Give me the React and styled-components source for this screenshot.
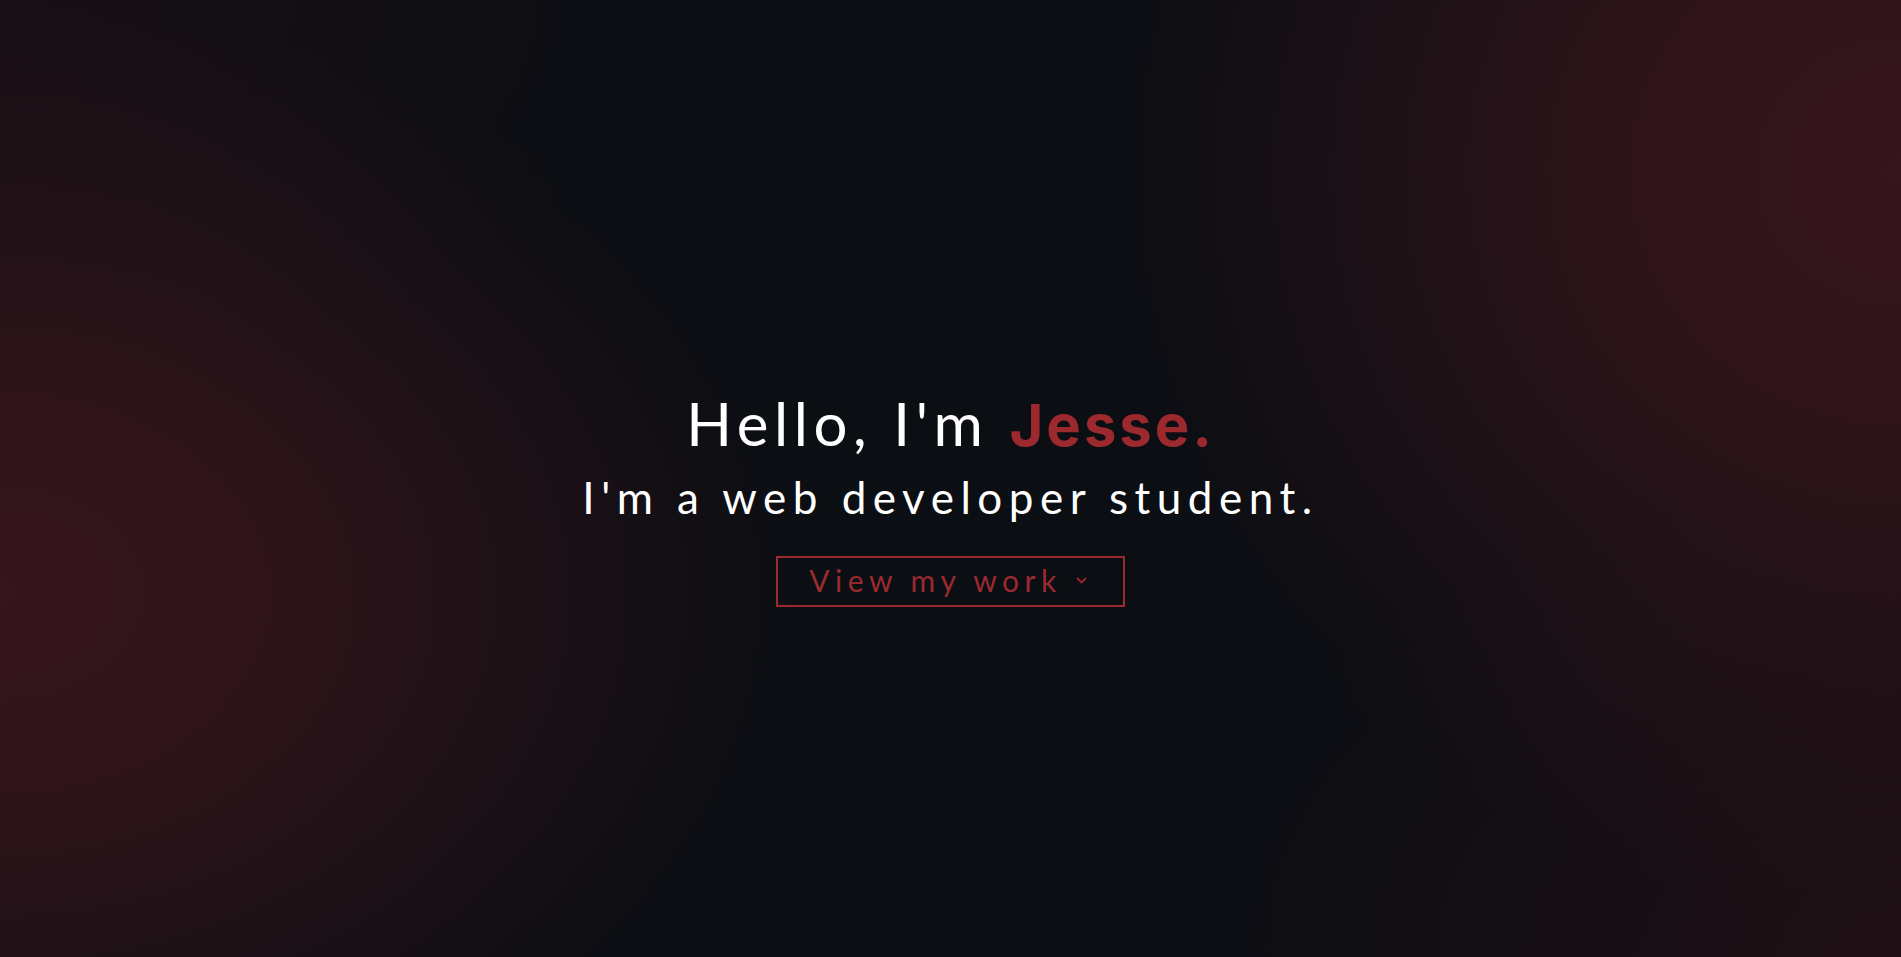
import React from 'react';
import styled, { createGlobalStyle } from 'styled-components';

const GlobalStyle = createGlobalStyle`
  html, body {
    margin: 0;
    padding: 0;
    background: #0b0e13;
  }
  * {
    box-sizing: border-box;
  }
`;

const Hero = styled.section`
  min-height: 100vh;
  display: flex;
  flex-direction: column;
  align-items: center;
  justify-content: center;
  padding-top: 37px;
  font-family: Lato, "Open Sans", sans-serif;
  background-color: #0b0e13;
  background-image:
    radial-gradient(ellipse 42% 62% at 0% 62%, rgba(54, 21, 27, 1) 0%, rgba(54, 21, 27, 0.8) 35%, rgba(54, 21, 27, 0) 100%),
    radial-gradient(ellipse 42% 78% at 100% 18%, rgba(54, 21, 27, 1) 0%, rgba(54, 21, 27, 0.8) 35%, rgba(54, 21, 27, 0) 100%),
    radial-gradient(ellipse 38% 50% at 100% 100%, rgba(34, 16, 22, 0.9) 0%, rgba(34, 16, 22, 0) 100%),
    radial-gradient(ellipse 35% 40% at 0% 0%, rgba(30, 16, 22, 0.7) 0%, rgba(30, 16, 22, 0) 100%);
`;

const Title = styled.h1`
  margin: 0;
  color: #fff;
  font-size: 60px;
  font-weight: 400;
  line-height: 72px;
  letter-spacing: 5.6px;
`;

const Name = styled.span`
  color: #9b292e;
  font-family: Inter, Lato, sans-serif;
  font-size: 58px;
  font-weight: 700;
  letter-spacing: 3px;
`;

const Subtitle = styled.h2`
  margin: 10px 0 0;
  color: #fff;
  font-size: 44px;
  font-weight: 400;
  line-height: 53px;
  letter-spacing: 6.5px;
`;

const WorkButton = styled.button`
  margin-top: 32px;
  display: flex;
  align-items: center;
  gap: 14px;
  padding: 4px 36px 6px 31px;
  background: transparent;
  border: 2px solid #9b292e;
  color: #9b292e;
  font-family: inherit;
  font-size: 30px;
  font-weight: 400;
  line-height: 37px;
  letter-spacing: 5.5px;
  cursor: pointer;
`;

const Chevron = () => (
  <svg width="11" height="7" viewBox="0 0 11 7" fill="none">
    <path d="M1 1 L5.5 5.5 L10 1" stroke="#9b292e" strokeWidth="1.8" />
  </svg>
);

function App() {
  return (
    <>
      <GlobalStyle />
      <Hero>
        <Title>
          Hello, I'm <Name>Jesse.</Name>
        </Title>
        <Subtitle>I'm a web developer student.</Subtitle>
        <WorkButton>
          View my work
          <Chevron />
        </WorkButton>
      </Hero>
    </>
  );
}

export default App;
